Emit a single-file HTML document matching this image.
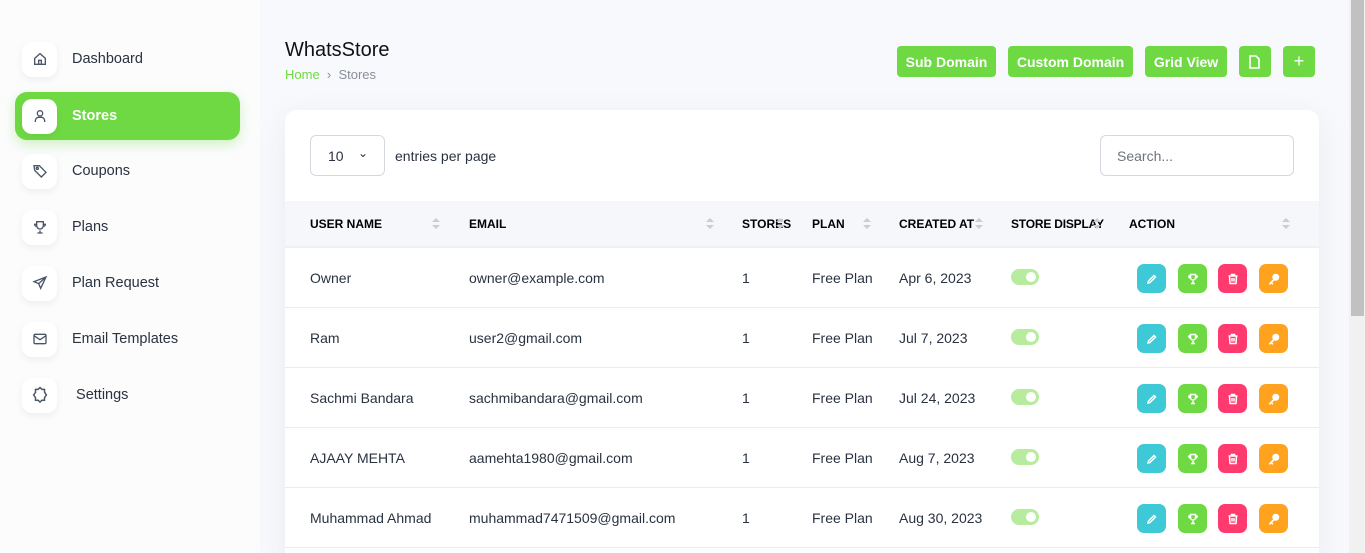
<!DOCTYPE html>
<html style="width:1365px;height:553px;overflow:hidden"><head><meta charset="utf-8"><style>
*{box-sizing:border-box;margin:0;padding:0}
body{width:1365px;height:553px;overflow:hidden;background:#f8f9fc;font-family:"Liberation Sans",sans-serif;color:#293240;position:relative}
.side{position:absolute;left:0;top:0;width:260px;height:553px;background:#fcfcfd}
.item{position:absolute;left:15px;width:225px;height:48px;border-radius:12px;display:flex;align-items:center;font-size:14.5px;color:#293240}
.item .ic{width:35px;height:35px;border-radius:10px;background:#fff;box-shadow:0 3px 8px rgba(0,0,0,.06);margin-left:7px;margin-right:15px;display:flex;align-items:center;justify-content:center}
.item.act{background:#6fd943;color:#fff;font-weight:bold;box-shadow:0 5px 12px rgba(111,217,67,.3)}
svg{display:block}
.title{position:absolute;left:285px;top:39px;font-size:20px;color:#111}
.bc{position:absolute;left:285px;top:67px;font-size:13px;color:#8a8f99}
.bc span{color:#6fd943}
.btn{position:absolute;top:46px;height:31px;background:#6fd943;color:#fff;border-radius:4px;font-size:14px;font-weight:bold;display:flex;align-items:center;justify-content:center}
.card{position:absolute;left:285px;top:110px;width:1034px;height:460px;background:#fff;border-radius:12px;box-shadow:0 6px 30px rgba(182,186,203,.2)}
.sel{position:absolute;left:25px;top:25px;width:75px;height:41px;border:1px solid #d5d8de;border-radius:6px;font-size:14px;padding:12px 0 0 17px}
.epp{position:absolute;left:110px;top:38px;font-size:14px}
.search{position:absolute;left:815px;top:25px;width:194px;height:41px;border:1px solid #d5d8de;border-radius:6px;font-size:14px;color:#6c757d;padding:12px 0 0 16px}
.thead{position:absolute;left:0;top:91px;width:1034px;height:47px;background:#f6f7fb;border-bottom:2px solid #eef0f3}
.th{position:absolute;top:16px;font-size:12px;font-weight:bold;color:#000}
.sort{position:absolute;top:17px;width:8px}
.sort:before{content:"";position:absolute;left:0;top:0;border:4px solid transparent;border-bottom:4px solid #ccc;border-top:0}
.sort:after{content:"";position:absolute;left:0;top:7px;border:4px solid transparent;border-top:4px solid #ccc;border-bottom:0}
.row{position:absolute;left:0;width:1034px;height:60px;border-bottom:1px solid #eaecef}
.td{position:absolute;top:22px;font-size:14px;color:#293240}
.tog{position:absolute;left:726px;top:21px;width:28px;height:16px;border-radius:8px;background:#b7ec9f}
.tog:after{content:"";position:absolute;right:3px;top:3px;width:10px;height:10px;border-radius:50%;background:#fff}
.ab{position:absolute;top:16px;width:29px;height:29px;border-radius:7px;display:flex;align-items:center;justify-content:center}
.sb{position:absolute;left:1349px;top:0;width:16px;height:553px;background:#f1f1f1}
.sb div{position:absolute;left:2px;top:0;width:13px;height:316px;background:#c1c1c1}
</style></head><body>
<div class="side">
<div class="item" style="top:35px"><div class="ic"><svg width="16" height="16" viewBox="0 0 24 24" fill="none" stroke="#4a5568" stroke-width="2"><path d="M4 11l8-7 8 7v9H4z M10 20v-6h4v6"/></svg></div>Dashboard</div>
<div class="item act" style="top:92px"><div class="ic"><svg width="16" height="16" viewBox="0 0 24 24" fill="none" stroke="#4a5568" stroke-width="2"><circle cx="12" cy="8" r="4"/><path d="M5 21v-2a5 5 0 0 1 5-5h4a5 5 0 0 1 5 5v2"/></svg></div>Stores</div>
<div class="item" style="top:147px"><div class="ic"><svg width="16" height="16" viewBox="0 0 24 24" fill="none" stroke="#4a5568" stroke-width="2"><path d="M3 4h8l10 10-7 7L4 11z"/><circle cx="8" cy="8" r="1.5"/></svg></div>Coupons</div>
<div class="item" style="top:203px"><div class="ic"><svg width="16" height="16" viewBox="0 0 24 24" fill="none" stroke="#4a5568" stroke-width="2"><path d="M8 21h8M12 17v4M7 4h10v6a5 5 0 0 1-10 0zM7 8H4a3 3 0 0 0 3 3M17 8h3a3 3 0 0 1-3 3"/></svg></div>Plans</div>
<div class="item" style="top:259px"><div class="ic"><svg width="16" height="16" viewBox="0 0 24 24" fill="none" stroke="#4a5568" stroke-width="2"><path d="M21 3L3 10l7 3 3 7zM10 13l11-10"/></svg></div>Plan Request</div>
<div class="item" style="top:315px"><div class="ic"><svg width="16" height="16" viewBox="0 0 24 24" fill="none" stroke="#4a5568" stroke-width="2"><rect x="3" y="5" width="18" height="14" rx="2"/><path d="M3 7l9 6 9-6"/></svg></div>Email Templates</div>
<div class="item" style="top:371px"><div class="ic"><svg width="18" height="18" viewBox="0 0 24 24" fill="none" stroke="#4a5568" stroke-width="2"><path d="M12 2l2.5 2.5H18v3.5L20.5 12 18 15.5V19h-3.5L12 21.5 9.5 19H6v-3.5L3.5 12 6 8.5V4.5h3.5z"/></svg></div>&nbsp;Settings</div>
</div>
<div class="title">WhatsStore</div>
<div class="bc"><span>Home</span> &nbsp;&#8250;&nbsp; Stores</div>
<div class="btn" style="left:897px;width:99px">Sub Domain</div>
<div class="btn" style="left:1008px;width:125px">Custom Domain</div>
<div class="btn" style="left:1145px;width:82px">Grid View</div>
<div class="btn" style="left:1239px;width:32px"><svg width="12" height="14" viewBox="0 0 12 14" fill="none" stroke="#fff" stroke-width="1.6"><path d="M1 1h6l3 3v9H1z"/></svg></div>
<div class="btn" style="left:1283px;width:32px;font-size:18px;font-weight:normal">+</div>
<div class="card">
<div class="sel">10 <span style="position:absolute;left:47px;top:10px;font-size:12px">&#8964;</span></div>
<div class="epp">entries per page</div>
<div class="search">Search...</div>
<div class="thead">
<div class="th" style="left:25px">USER NAME</div><div class="sort" style="left:147px"></div>
<div class="th" style="left:184px">EMAIL</div><div class="sort" style="left:421px"></div>
<div class="th" style="left:457px">STORES</div><div class="sort" style="left:491px"></div>
<div class="th" style="left:527px">PLAN</div><div class="sort" style="left:578px"></div>
<div class="th" style="left:614px">CREATED AT</div><div class="sort" style="left:690px"></div>
<div class="th" style="left:726px;letter-spacing:-0.2px">STORE DISPLAY</div><div class="sort" style="left:808px"></div>
<div class="th" style="left:844px">ACTION</div><div class="sort" style="left:997px"></div>
</div>
<div class="row" style="top:138px"><div class="td" style="left:25px">Owner</div><div class="td" style="left:184px">owner@example.com</div><div class="td" style="left:457px">1</div><div class="td" style="left:527px">Free Plan</div><div class="td" style="left:614px">Apr 6, 2023</div><div class="tog"></div>
<div class="ab" style="left:852px;background:#3ec9d6"><svg width="12" height="12" viewBox="0 0 24 24" fill="none" stroke="#fff" stroke-width="3"><path d="M4 20l4-1 11-11-3-3L5 16z"/></svg></div><div class="ab" style="left:893px;background:#6fd943"><svg width="12" height="12" viewBox="0 0 24 24" fill="none" stroke="#fff" stroke-width="3"><path d="M8 21h8M12 16v5M7 3h10v6a5 5 0 0 1-10 0zM7 6H4a3 3 0 0 0 3 4M17 6h3a3 3 0 0 1-3 4"/></svg></div><div class="ab" style="left:933px;background:#ff3a6e"><svg width="12" height="12" viewBox="0 0 24 24" fill="none" stroke="#fff" stroke-width="3"><path d="M3 6h18M9 6V3h6v3M5 6l1 15h12l1-15M10 10v7M14 10v7"/></svg></div><div class="ab" style="left:974px;background:#ffa21d"><svg width="14" height="14" viewBox="0 0 24 24" fill="#fff"><circle cx="15" cy="9" r="6"/><path d="M11 12l-8 8 2 2 2-2 2 2 2-2-2-2 4-4z"/></svg></div></div>
<div class="row" style="top:198px"><div class="td" style="left:25px">Ram</div><div class="td" style="left:184px">user2@gmail.com</div><div class="td" style="left:457px">1</div><div class="td" style="left:527px">Free Plan</div><div class="td" style="left:614px">Jul 7, 2023</div><div class="tog"></div>
<div class="ab" style="left:852px;background:#3ec9d6"><svg width="12" height="12" viewBox="0 0 24 24" fill="none" stroke="#fff" stroke-width="3"><path d="M4 20l4-1 11-11-3-3L5 16z"/></svg></div><div class="ab" style="left:893px;background:#6fd943"><svg width="12" height="12" viewBox="0 0 24 24" fill="none" stroke="#fff" stroke-width="3"><path d="M8 21h8M12 16v5M7 3h10v6a5 5 0 0 1-10 0zM7 6H4a3 3 0 0 0 3 4M17 6h3a3 3 0 0 1-3 4"/></svg></div><div class="ab" style="left:933px;background:#ff3a6e"><svg width="12" height="12" viewBox="0 0 24 24" fill="none" stroke="#fff" stroke-width="3"><path d="M3 6h18M9 6V3h6v3M5 6l1 15h12l1-15M10 10v7M14 10v7"/></svg></div><div class="ab" style="left:974px;background:#ffa21d"><svg width="14" height="14" viewBox="0 0 24 24" fill="#fff"><circle cx="15" cy="9" r="6"/><path d="M11 12l-8 8 2 2 2-2 2 2 2-2-2-2 4-4z"/></svg></div></div>
<div class="row" style="top:258px"><div class="td" style="left:25px">Sachmi Bandara</div><div class="td" style="left:184px">sachmibandara@gmail.com</div><div class="td" style="left:457px">1</div><div class="td" style="left:527px">Free Plan</div><div class="td" style="left:614px">Jul 24, 2023</div><div class="tog"></div>
<div class="ab" style="left:852px;background:#3ec9d6"><svg width="12" height="12" viewBox="0 0 24 24" fill="none" stroke="#fff" stroke-width="3"><path d="M4 20l4-1 11-11-3-3L5 16z"/></svg></div><div class="ab" style="left:893px;background:#6fd943"><svg width="12" height="12" viewBox="0 0 24 24" fill="none" stroke="#fff" stroke-width="3"><path d="M8 21h8M12 16v5M7 3h10v6a5 5 0 0 1-10 0zM7 6H4a3 3 0 0 0 3 4M17 6h3a3 3 0 0 1-3 4"/></svg></div><div class="ab" style="left:933px;background:#ff3a6e"><svg width="12" height="12" viewBox="0 0 24 24" fill="none" stroke="#fff" stroke-width="3"><path d="M3 6h18M9 6V3h6v3M5 6l1 15h12l1-15M10 10v7M14 10v7"/></svg></div><div class="ab" style="left:974px;background:#ffa21d"><svg width="14" height="14" viewBox="0 0 24 24" fill="#fff"><circle cx="15" cy="9" r="6"/><path d="M11 12l-8 8 2 2 2-2 2 2 2-2-2-2 4-4z"/></svg></div></div>
<div class="row" style="top:318px"><div class="td" style="left:25px">AJAAY MEHTA</div><div class="td" style="left:184px">aamehta1980@gmail.com</div><div class="td" style="left:457px">1</div><div class="td" style="left:527px">Free Plan</div><div class="td" style="left:614px">Aug 7, 2023</div><div class="tog"></div>
<div class="ab" style="left:852px;background:#3ec9d6"><svg width="12" height="12" viewBox="0 0 24 24" fill="none" stroke="#fff" stroke-width="3"><path d="M4 20l4-1 11-11-3-3L5 16z"/></svg></div><div class="ab" style="left:893px;background:#6fd943"><svg width="12" height="12" viewBox="0 0 24 24" fill="none" stroke="#fff" stroke-width="3"><path d="M8 21h8M12 16v5M7 3h10v6a5 5 0 0 1-10 0zM7 6H4a3 3 0 0 0 3 4M17 6h3a3 3 0 0 1-3 4"/></svg></div><div class="ab" style="left:933px;background:#ff3a6e"><svg width="12" height="12" viewBox="0 0 24 24" fill="none" stroke="#fff" stroke-width="3"><path d="M3 6h18M9 6V3h6v3M5 6l1 15h12l1-15M10 10v7M14 10v7"/></svg></div><div class="ab" style="left:974px;background:#ffa21d"><svg width="14" height="14" viewBox="0 0 24 24" fill="#fff"><circle cx="15" cy="9" r="6"/><path d="M11 12l-8 8 2 2 2-2 2 2 2-2-2-2 4-4z"/></svg></div></div>
<div class="row" style="top:378px"><div class="td" style="left:25px">Muhammad Ahmad</div><div class="td" style="left:184px">muhammad7471509@gmail.com</div><div class="td" style="left:457px">1</div><div class="td" style="left:527px">Free Plan</div><div class="td" style="left:614px">Aug 30, 2023</div><div class="tog"></div>
<div class="ab" style="left:852px;background:#3ec9d6"><svg width="12" height="12" viewBox="0 0 24 24" fill="none" stroke="#fff" stroke-width="3"><path d="M4 20l4-1 11-11-3-3L5 16z"/></svg></div><div class="ab" style="left:893px;background:#6fd943"><svg width="12" height="12" viewBox="0 0 24 24" fill="none" stroke="#fff" stroke-width="3"><path d="M8 21h8M12 16v5M7 3h10v6a5 5 0 0 1-10 0zM7 6H4a3 3 0 0 0 3 4M17 6h3a3 3 0 0 1-3 4"/></svg></div><div class="ab" style="left:933px;background:#ff3a6e"><svg width="12" height="12" viewBox="0 0 24 24" fill="none" stroke="#fff" stroke-width="3"><path d="M3 6h18M9 6V3h6v3M5 6l1 15h12l1-15M10 10v7M14 10v7"/></svg></div><div class="ab" style="left:974px;background:#ffa21d"><svg width="14" height="14" viewBox="0 0 24 24" fill="#fff"><circle cx="15" cy="9" r="6"/><path d="M11 12l-8 8 2 2 2-2 2 2 2-2-2-2 4-4z"/></svg></div></div>
</div>
<div class="sb"><div></div></div>
</body></html>
